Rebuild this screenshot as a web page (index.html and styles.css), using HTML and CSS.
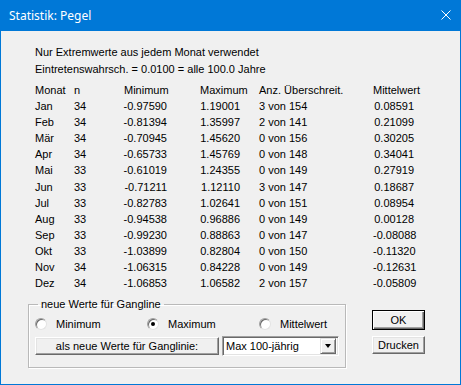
FILE: index.html
```html
<!DOCTYPE html>
<html lang="de">
<head>
  <meta charset="UTF-8" />
  <title>Statistik: Pegel</title>
  <link rel="stylesheet" href="styles.css">
</head>
<body>
  <div class="window">
    <div class="titlebar">
      <span class="title">Statistik: Pegel</span>
      <svg class="close" width="10" height="10" viewBox="0 0 10 10">
        <path d="M0.5 0.5 L9.5 9.5 M9.5 0.5 L0.5 9.5" stroke="#fff" stroke-width="1" fill="none" />
      </svg>
    </div>

    <div class="content">
      <p class="info">Nur Extremwerte aus jedem Monat verwendet</p>
      <p class="info">Eintretenswahrsch. = 0.0100 = alle 100.0 Jahre</p>

      <div class="stats">
        <div class="row head">
          <span>Monat</span><span>n</span><span class="h-min">Minimum</span><span class="h-max">Maximum</span><span class="h-anz">Anz. Überschreit.</span><span class="h-mit">Mittelwert</span>
        </div>
        <div class="row"><span>Jan</span><span>34</span><span class="num">-0.97590</span><span class="num">1.19001</span><span class="anz">3 von 154</span><span class="num">0.08591</span></div>
        <div class="row"><span>Feb</span><span>34</span><span class="num">-0.81394</span><span class="num">1.35997</span><span class="anz">2 von 141</span><span class="num">0.21099</span></div>
        <div class="row"><span>Mär</span><span>34</span><span class="num">-0.70945</span><span class="num">1.45620</span><span class="anz">0 von 156</span><span class="num">0.30205</span></div>
        <div class="row"><span>Apr</span><span>34</span><span class="num">-0.65733</span><span class="num">1.45769</span><span class="anz">0 von 148</span><span class="num">0.34041</span></div>
        <div class="row"><span>Mai</span><span>33</span><span class="num">-0.61019</span><span class="num">1.24355</span><span class="anz">0 von 149</span><span class="num">0.27919</span></div>
        <div class="row"><span>Jun</span><span>33</span><span class="num">-0.71211</span><span class="num">1.12110</span><span class="anz">3 von 147</span><span class="num">0.18687</span></div>
        <div class="row"><span>Jul</span><span>33</span><span class="num">-0.82783</span><span class="num">1.02641</span><span class="anz">0 von 151</span><span class="num">0.08954</span></div>
        <div class="row"><span>Aug</span><span>33</span><span class="num">-0.94538</span><span class="num">0.96886</span><span class="anz">0 von 149</span><span class="num">0.00128</span></div>
        <div class="row"><span>Sep</span><span>33</span><span class="num">-0.99230</span><span class="num">0.88863</span><span class="anz">0 von 147</span><span class="num">-0.08088</span></div>
        <div class="row"><span>Okt</span><span>33</span><span class="num">-1.03899</span><span class="num">0.82804</span><span class="anz">0 von 150</span><span class="num">-0.11320</span></div>
        <div class="row"><span>Nov</span><span>34</span><span class="num">-1.06315</span><span class="num">0.84228</span><span class="anz">0 von 149</span><span class="num">-0.12631</span></div>
        <div class="row"><span>Dez</span><span>34</span><span class="num">-1.06853</span><span class="num">1.06582</span><span class="anz">2 von 157</span><span class="num">-0.05809</span></div>
      </div>

      <div class="bottom">
        <fieldset class="group">
          <legend>neue Werte für Gangline</legend>
          <div class="radios">
            <label class="radio"><span class="dot"></span>Minimum</label>
            <label class="radio"><span class="dot checked"></span>Maximum</label>
            <label class="radio"><span class="dot"></span>Mittelwert</label>
          </div>
          <div class="actions">
            <button class="btn wide">als neue Werte für Ganglinie:</button>
            <div class="combo">
              <span class="combo-text">Max 100-jährig</span>
              <span class="combo-btn"><span class="arrow"></span></span>
            </div>
          </div>
        </fieldset>

        <div class="side">
          <button class="btn ok">OK</button>
          <button class="btn">Drucken</button>
        </div>
      </div>
    </div>
  </div>
</body>
</html>
```

FILE: styles.css
```css
* {
  box-sizing: border-box;
}

body {
  margin: 0;
  font-family: "Liberation Sans", Arial, sans-serif;
  font-size: 11px;
  color: #000;
  background: #f0f0f0;
}

.window {
  width: 461px;
  height: 385px;
  border: 1px solid #0078d7;
  border-top: 0;
  background: #f0f0f0;
  display: flex;
  flex-direction: column;
}

.titlebar {
  height: 31px;
  background: #0078d7;
  color: #fff;
  display: flex;
  align-items: center;
  justify-content: space-between;
  padding: 0 9px 0 8px;
  margin: 0 -1px;
  padding-left: 9px;
  padding-right: 10px;
}

.title {
  font-family: "Noto Sans", "Open Sans", sans-serif;
  font-size: 12px;
  margin-top: -1px;
}

.close {
  display: block;
  margin-top: -2px;
}

.content {
  padding: 13px 0 0 27px;
}

.info {
  margin: 0 0 0 7px;
  line-height: 16.5px;
}

.stats {
  margin: 5px 0 0 7px;
}

.row {
  display: grid;
  grid-template-columns: 39px 48px 45px 73px 133px 41px;
  line-height: 16.1px;
  white-space: nowrap;
}

.row .num {
  text-align: right;
}

.h-min {
  padding-left: 2px;
}

.h-max {
  padding-left: 33px;
}

.h-anz,
.anz {
  padding-left: 19px;
}

.bottom {
  display: flex;
  align-items: flex-start;
  margin-top: 7px;
}

.group {
  width: 318px;
  height: 70px;
  margin: 0;
  padding: 0 5px 0 6px;
  border: 1px solid #b9b9b9;
  box-shadow: inset 1px 1px 0 #fff, 1px 1px 0 #fff;
}

.group legend {
  margin-left: 3px;
  padding: 0 3px;
  line-height: 13px;
}

.radios {
  display: grid;
  grid-template-columns: 112px 112px auto;
  margin-top: 5px;
  height: 16px;
}

.radio {
  display: flex;
  align-items: center;
  gap: 9px;
}

.dot {
  width: 12px;
  height: 12px;
  border-radius: 50%;
  background: #fff;
  border: 1px solid;
  border-color: #a0a0a0 #e3e3e3 #e3e3e3 #a0a0a0;
  box-shadow: inset 1px 1px 0 #696969;
  display: flex;
  align-items: center;
  justify-content: center;
}

.dot.checked::after {
  content: "";
  width: 4px;
  height: 4px;
  border-radius: 50%;
  background: #000;
}

.actions {
  display: flex;
  align-items: center;
  gap: 3px;
  margin-top: 4px;
}

.btn {
  font: inherit;
  color: #000;
  background: #f0f0f0;
  border: 1px solid;
  border-color: #fff #696969 #696969 #fff;
  box-shadow: inset -1px -1px 0 #a0a0a0, inset 1px 1px 0 #e3e3e3;
  padding: 0;
  height: 18px;
}

.btn.wide {
  width: 184px;
}

.combo {
  width: 117px;
  height: 20px;
  display: flex;
  align-items: center;
  justify-content: space-between;
  background: #fff;
  border: 1px solid;
  border-color: #a0a0a0 #fff #fff #a0a0a0;
  box-shadow: inset 1px 1px 0 #696969, inset -1px -1px 0 #e3e3e3;
  padding: 2px 2px 2px 3px;
}

.combo-btn {
  width: 16px;
  height: 16px;
  background: #f0f0f0;
  border: 1px solid;
  border-color: #e3e3e3 #696969 #696969 #e3e3e3;
  box-shadow: inset 1px 1px 0 #fff, inset -1px -1px 0 #a0a0a0;
  display: flex;
  align-items: center;
  justify-content: center;
}

.arrow {
  width: 0;
  height: 0;
  border-left: 3.5px solid transparent;
  border-right: 3.5px solid transparent;
  border-top: 4px solid #000;
}

.side {
  display: flex;
  flex-direction: column;
  gap: 6px;
  margin: 12px 0 0 26px;
}

.side .btn {
  width: 53px;
}

.btn.ok {
  height: 20px;
  border: 1px solid #000;
  box-shadow: inset 1px 1px 0 #fff, inset -1px -1px 0 #696969, inset -2px -2px 0 #a0a0a0;
}
```
